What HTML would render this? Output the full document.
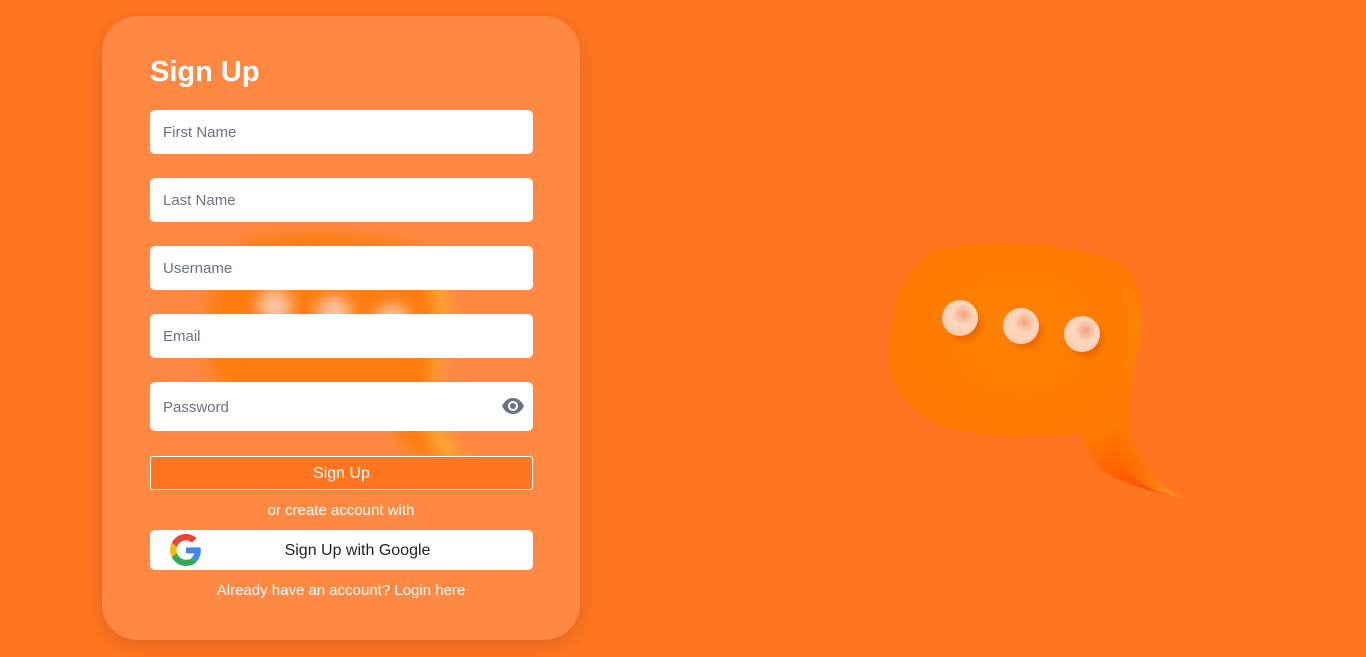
<!DOCTYPE html>
<html><head><meta charset="utf-8"><style>
*{box-sizing:border-box;margin:0;padding:0}
body{width:1366px;height:657px;overflow:hidden;background:#ff7520;font-family:"Liberation Sans",sans-serif;position:relative}
.card{position:absolute;left:102px;top:16px;width:478px;height:624px;border-radius:36px;background:rgba(255,150,90,0.6);box-shadow:0 6px 20px rgba(0,0,0,0.12);overflow:hidden}
.blur{position:absolute;left:95px;top:205px;filter:blur(7px);opacity:.75}
h1{position:absolute;left:48px;top:40px;color:#fff;font-size:29px;font-weight:bold}
.in{position:absolute;left:48px;width:383px;height:44px;background:#fff;border-radius:5px;color:#6b7280;font-size:15px;padding-left:13px;line-height:46px}
.btn{position:absolute;left:48px;top:440px;width:383px;height:34px;border:1px solid #fff;border-radius:3px;background:#ff7520;color:#fff;text-align:center;line-height:34px;font-size:16px}
.t{position:absolute;left:0;width:478px;text-align:center;color:#fff;font-size:15px}
.g{position:absolute;left:48px;top:514px;width:383px;height:40px;background:#fff;border-radius:5px;color:#222;font-size:16px;line-height:42px;text-align:center;padding-left:32px}
</style></head><body>
<svg width="1366" height="657" style="position:absolute;left:0;top:0">
<defs>
<radialGradient id="bg1" cx="0.45" cy="0.35" r="0.75"><stop offset="0" stop-color="#ff8200"/><stop offset="0.65" stop-color="#ff7800"/><stop offset="1" stop-color="#ff5000"/></radialGradient>
<linearGradient id="rim" x1="0" y1="0" x2="1" y2="0"><stop offset="0" stop-color="#ff7a00" stop-opacity="0"/><stop offset="1" stop-color="#ffb030"/></linearGradient>
<radialGradient id="dot" cx="0.6" cy="0.4" r="0.6"><stop offset="0" stop-color="#eea47e"/><stop offset="0.5" stop-color="#fdd6bd"/><stop offset="1" stop-color="#fbd0b4"/></radialGradient>
<filter id="sh"><feGaussianBlur stdDeviation="3"/></filter>
</defs>
<path d="M945 248 C1010 238 1090 248 1118 262 C1142 275 1145 320 1138 345 C1132 375 1128 400 1130 425 C1135 455 1155 485 1183 498 C1150 492 1120 482 1105 472 C1092 460 1085 445 1078 432 C1040 438 970 440 930 420 C895 402 885 370 890 335 C895 295 910 255 945 248Z" fill="url(#bg1)"/>
<path d="M1105 262 C1140 275 1145 320 1138 345 C1132 375 1128 400 1130 425 C1135 455 1155 485 1183 498 C1150 492 1130 480 1120 460 C1115 420 1128 360 1125 320 C1122 290 1115 272 1105 262Z" fill="url(#rim)" opacity=".9"/>
<g filter="url(#sh)" fill="#d85000" opacity=".45"><circle cx="965" cy="324" r="17"/><circle cx="1026" cy="332" r="17"/><circle cx="1087" cy="340" r="17"/></g>
<circle cx="960" cy="318" r="18" fill="url(#dot)"/>
<circle cx="1021" cy="326" r="18" fill="url(#dot)"/>
<circle cx="1082" cy="334" r="18" fill="url(#dot)"/>
</svg>
<div class="card">
<svg class="blur" width="310" height="290" viewBox="880 230 320 300"><path d="M945 248 C1010 238 1090 248 1118 262 C1142 275 1145 320 1138 345 C1132 375 1128 400 1130 425 C1135 455 1155 485 1183 498 C1150 492 1120 482 1105 472 C1092 460 1085 445 1078 432 C1040 438 970 440 930 420 C895 402 885 370 890 335 C895 295 910 255 945 248Z" fill="#ff7800"/><path d="M1105 262 C1140 275 1145 320 1138 345 C1132 375 1128 400 1130 425 C1135 455 1155 485 1183 498 C1150 492 1130 480 1120 460 C1115 420 1128 360 1125 320 C1122 290 1115 272 1105 262Z" fill="#ffb030"/><circle cx="960" cy="318" r="18" fill="#fdd6bd"/><circle cx="1021" cy="326" r="18" fill="#fdd6bd"/><circle cx="1082" cy="334" r="18" fill="#fdd6bd"/></svg>
<h1>Sign Up</h1>
<div class="in" style="top:94px">First Name</div>
<div class="in" style="top:162px">Last Name</div>
<div class="in" style="top:230px">Username</div>
<div class="in" style="top:298px">Email</div>
<div class="in" style="top:366px;height:49px;line-height:52px">Password
<svg width="24" height="18" viewBox="0 0 24 18" style="position:absolute;right:8px;top:15px"><path d="M1 9C4 3 8 1 12 1s8 2 11 8c-3 6-7 8-11 8S4 15 1 9Z" fill="#6b7280"/><circle cx="12" cy="9" r="5" fill="#fff"/><circle cx="12" cy="9" r="3" fill="#6b7280"/></svg></div>
<div class="btn">Sign Up</div>
<div class="t" style="top:486px">or create account with</div>
<div class="g"><svg width="32" height="32" viewBox="0 0 48 48" style="position:absolute;left:20px;top:4px"><path fill="#EA4335" d="M24 9.5c3.5 0 6.6 1.2 9 3.5l6.7-6.7C35.6 2.4 30.2 0 24 0 14.6 0 6.6 5.4 2.7 13.3l7.8 6C12.4 13.7 17.7 9.5 24 9.5z"/><path fill="#4285F4" d="M46.1 24.5c0-1.6-.1-3.1-.4-4.5H24v9h12.4c-.5 2.9-2.2 5.4-4.7 7l7.6 5.9C43.7 37.8 46.1 31.7 46.1 24.5z"/><path fill="#FBBC05" d="M10.5 28.7c-.5-1.5-.8-3-.8-4.7s.3-3.2.8-4.7l-7.8-6C1 16.6 0 20.2 0 24s1 7.4 2.7 10.7l7.8-6z"/><path fill="#34A853" d="M24 48c6.5 0 11.9-2.1 15.9-5.8l-7.6-5.9c-2.1 1.4-4.9 2.3-8.3 2.3-6.3 0-11.600-4.200-13.5-9.900l-7.8 6C6.6 42.6 14.6 48 24 48z"/></svg>Sign Up with Google</div>
<div class="t" style="top:566px">Already have an account? Login here</div>
</div>
</body></html>
